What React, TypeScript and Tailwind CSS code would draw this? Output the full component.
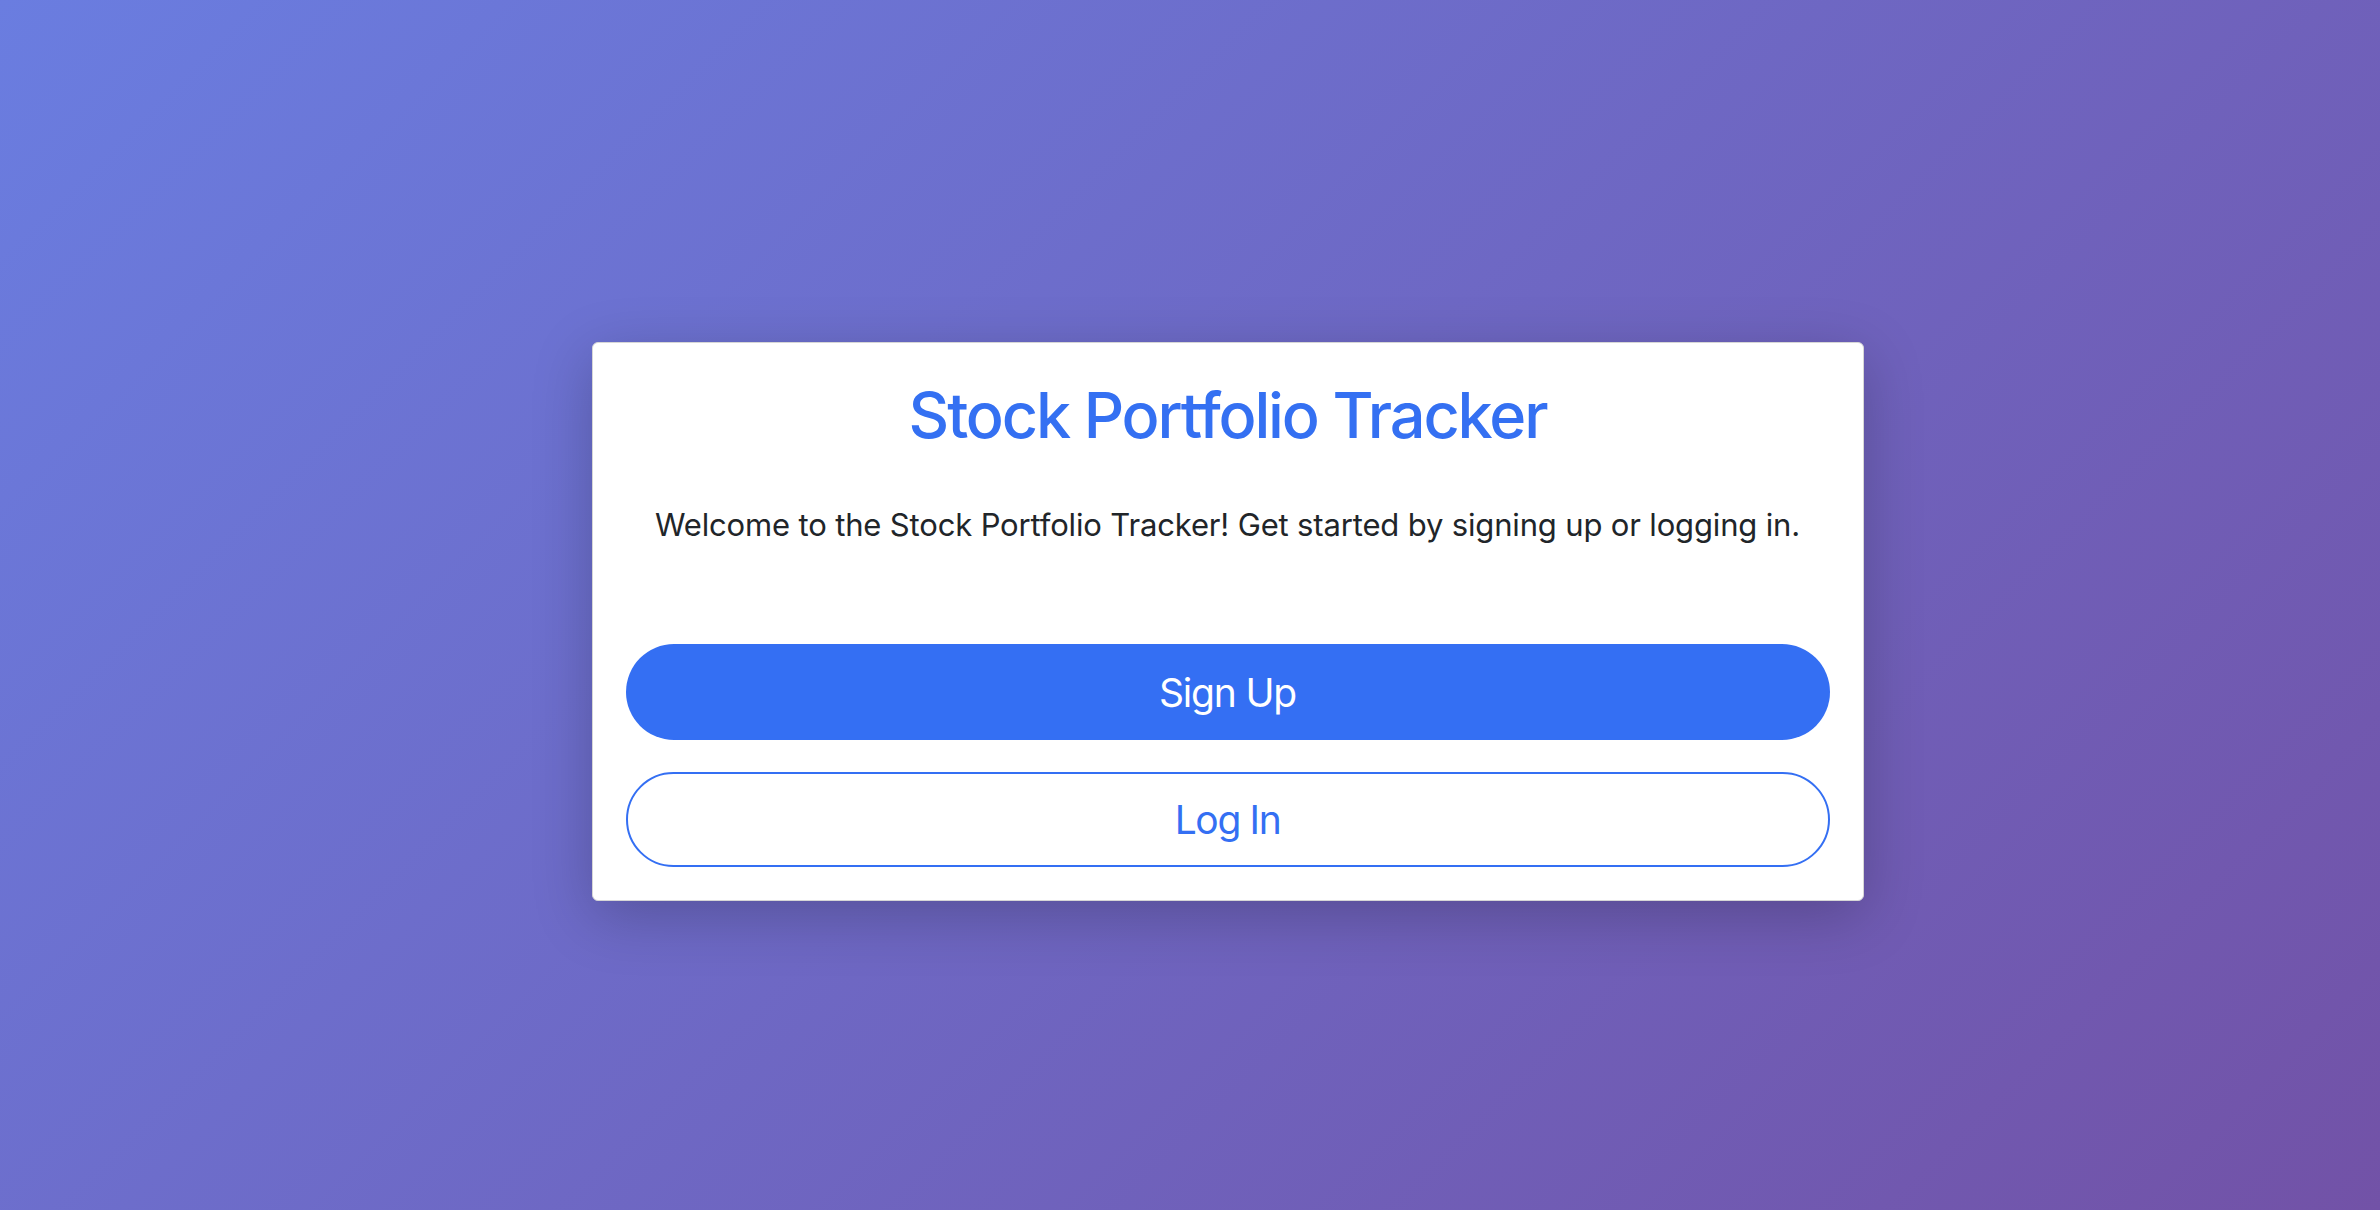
export default function App() {
  return (
    <div
      className="min-h-screen w-full flex items-center justify-center bg-[linear-gradient(135deg,#6a7de0_0%,#7252a7_100%)] pl-[75px] pt-[33px] [font-variant-ligatures:none]"
      style={{ fontFamily: 'Inter, "Noto Sans", "Liberation Sans", sans-serif' }}
    >
      <div className="w-[1272px] bg-white border border-[#d6d6d6] rounded-[6px] shadow-[0_15px_60px_rgba(0,0,0,0.22)] px-[33px] pt-[34px] pb-[33px] flex flex-col">
        <h1 className="text-center text-[#3470f2] text-[63px] leading-[76px] font-medium tracking-[-0.034em]">
          Stock Portfolio Tracker
        </h1>
        <p className="mt-[48px] text-center text-[#212529] text-[31px] leading-[48px] tracking-[-0.005em]">
          Welcome to the Stock Portfolio Tracker! Get started by signing up or logging in.
        </p>
        <button className="mt-[95px] h-[96px] w-full rounded-full bg-[#346ff3] text-white text-[39px] leading-none tracking-[-0.03em]">
          Sign Up
        </button>
        <button className="mt-[32px] h-[95px] w-full rounded-full bg-white border-2 border-[#346ff3] text-[#346ff3] text-[39px] leading-none tracking-[-0.035em]">
          Log In
        </button>
      </div>
    </div>
  );
}
